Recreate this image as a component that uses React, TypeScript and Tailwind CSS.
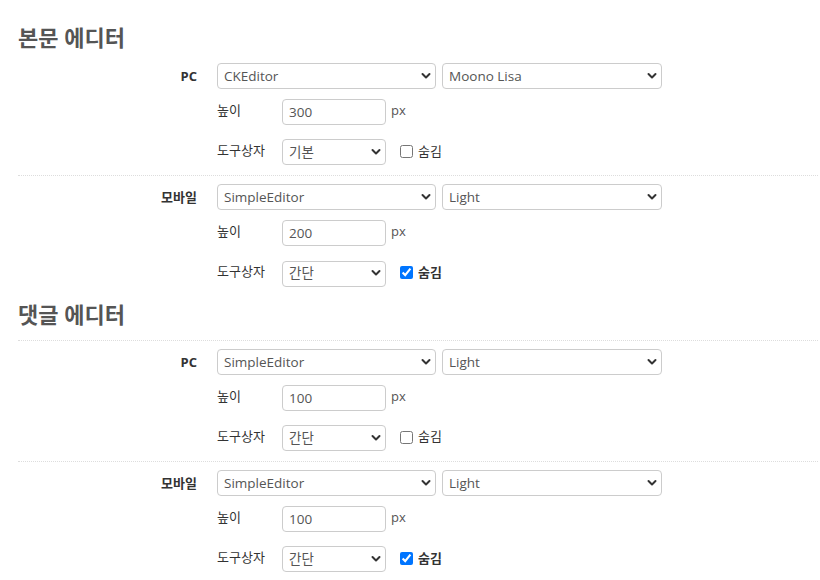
import { useState } from "react";

const FONT = { fontFamily: '"Open Sans", "Noto Sans CJK KR", sans-serif' };

type Group = {
  label: string;
  editor: string;
  skin: string;
  height: string;
  toolbar: string;
  hide: boolean;
};

const SECTIONS: { title: string; groups: Group[] }[] = [
  {
    title: "본문 에디터",
    groups: [
      { label: "PC", editor: "CKEditor", skin: "Moono Lisa", height: "300", toolbar: "기본", hide: false },
      { label: "모바일", editor: "SimpleEditor", skin: "Light", height: "200", toolbar: "간단", hide: true },
    ],
  },
  {
    title: "댓글 에디터",
    groups: [
      { label: "PC", editor: "SimpleEditor", skin: "Light", height: "100", toolbar: "간단", hide: false },
      { label: "모바일", editor: "SimpleEditor", skin: "Light", height: "100", toolbar: "간단", hide: true },
    ],
  },
];

function Chevron() {
  return (
    <svg
      className="pointer-events-none absolute right-[5px] top-1/2 -translate-y-1/2"
      width="10"
      height="7"
      viewBox="0 0 10 7"
      fill="none"
    >
      <path d="M1.5 1.5 L5 5 L8.5 1.5" stroke="#333" strokeWidth="2" strokeLinecap="round" strokeLinejoin="round" />
    </svg>
  );
}

function Select({ value, options, className }: { value: string; options: string[]; className: string }) {
  return (
    <div className={`relative ${className}`}>
      <select
        defaultValue={value}
        className="h-[26px] w-full appearance-none rounded border border-[#ccc] bg-white pl-[6px] pr-5 text-[13.5px] text-[#555] outline-none"
      >
        {options.map((o) => (
          <option key={o}>{o}</option>
        ))}
      </select>
      <Chevron />
    </div>
  );
}

function EditorGroup({ g, first }: { g: Group; first: boolean }) {
  const [hide, setHide] = useState(g.hide);
  return (
    <div
      className={`flex border-t border-dotted pb-[10px] pt-2 ${first ? "border-transparent" : "border-[#ddd]"}`}
    >
      <div className="w-[179px] text-right text-[13px] font-bold leading-[26px] text-[#333]">{g.label}</div>
      <div className="ml-5 flex flex-col">
        <div className="flex gap-[6px]">
          <Select
            value={g.editor}
            options={["CKEditor", "SimpleEditor", "Textarea"]}
            className="w-[219px]"
          />
          <Select
            value={g.skin}
            options={["Moono Lisa", "Moono", "Light", "Dark"]}
            className="w-[220px]"
          />
        </div>
        <div className="mt-[10px] flex items-start">
          <span className="w-[65px] text-[13px] leading-[23px] text-[#333]">높이</span>
          <input
            defaultValue={g.height}
            className="h-[26px] w-[104px] rounded border border-[#ccc] bg-white px-[6px] text-[13.5px] text-[#555] outline-none"
          />
          <span className="ml-[5px] text-[13px] leading-[23px] text-[#555]">px</span>
        </div>
        <div className="mt-[14px] flex items-start">
          <span className="w-[65px] text-[13px] leading-[23px] text-[#333]">도구상자</span>
          <Select value={g.toolbar} options={["기본", "간단"]} className="w-[104px]" />
          <label className="ml-[14px] flex h-[25px] items-center gap-[5px] text-[13px] text-[#333]">
            <input
              type="checkbox"
              checked={hide}
              onChange={(e) => setHide(e.target.checked)}
              className="m-0 h-[13px] w-[13px]"
            />
            <span className={hide ? "font-bold" : ""}>숨김</span>
          </label>
        </div>
      </div>
    </div>
  );
}

export default function App() {
  return (
    <div className="min-h-[580px] bg-white pl-[18px] pr-[2px] pt-5" style={FONT}>
      {SECTIONS.map((s, si) => (
        <section key={s.title}>
          <h2 className={`text-[22px] font-bold leading-[34px] text-[#555] ${si > 0 ? "pb-[9px]" : ""}`}>
            {s.title}
          </h2>
          {s.groups.map((g, gi) => (
            <EditorGroup key={gi} g={g} first={si === 0 && gi === 0} />
          ))}
        </section>
      ))}
    </div>
  );
}
